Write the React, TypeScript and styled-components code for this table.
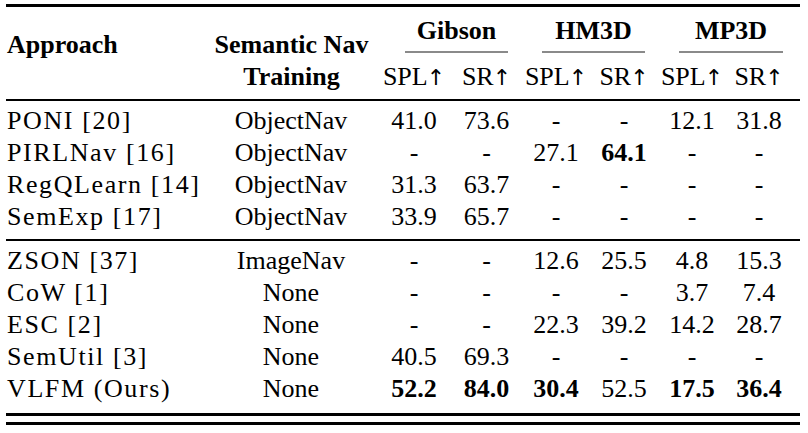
import { createGlobalStyle, styled } from 'styled-components'

const GlobalStyle = createGlobalStyle`
  html, body {
    margin: 0;
    padding: 0;
    background: #fff;
  }
  body {
    font-family: "Liberation Serif", "Times New Roman", Times, serif;
    color: #000;
  }
`

type Entry = {
  name: string
  training: string
  vals: string[]
  bold?: number[]
}

const blocks: Entry[][] = [
  [
    { name: 'PONI [20]', training: 'ObjectNav', vals: ['41.0', '73.6', '-', '-', '12.1', '31.8'] },
    { name: 'PIRLNav [16]', training: 'ObjectNav', vals: ['-', '-', '27.1', '64.1', '-', '-'], bold: [3] },
    { name: 'RegQLearn [14]', training: 'ObjectNav', vals: ['31.3', '63.7', '-', '-', '-', '-'] },
    { name: 'SemExp [17]', training: 'ObjectNav', vals: ['33.9', '65.7', '-', '-', '-', '-'] },
  ],
  [
    { name: 'ZSON [37]', training: 'ImageNav', vals: ['-', '-', '12.6', '25.5', '4.8', '15.3'] },
    { name: 'CoW [1]', training: 'None', vals: ['-', '-', '-', '-', '3.7', '7.4'] },
    { name: 'ESC [2]', training: 'None', vals: ['-', '-', '22.3', '39.2', '14.2', '28.7'] },
    { name: 'SemUtil [3]', training: 'None', vals: ['40.5', '69.3', '-', '-', '-', '-'] },
    {
      name: 'VLFM (Ours)',
      training: 'None',
      vals: ['52.2', '84.0', '30.4', '52.5', '17.5', '36.4'],
      bold: [0, 1, 2, 4, 5],
    },
  ],
]

// dataset groups: column span + trim of the cmidrule (left / right)
const datasets = [
  { label: 'Gibson', cols: '3 / 5', ml: 28, mr: 14 },
  { label: 'HM3D', cols: '5 / 7', ml: 20, mr: 13 },
  { label: 'MP3D', cols: '7 / 9', ml: 21, mr: 9 },
]

const metrics = ['SPL', 'SR', 'SPL', 'SR', 'SPL', 'SR']

function App() {
  return (
    <>
      <GlobalStyle />
      <Page>
        <Rule $h={3} $mt={0} $mb={8} />
        <Head>
          <HeadStack $col="1" $align="flex-start">
            <span>Approach</span>
            <span>&nbsp;</span>
          </HeadStack>
          <HeadStack $col="2" $align="center">
            <span>Semantic Nav</span>
            <span>Training</span>
          </HeadStack>
          {datasets.map((d) => (
            <GroupHead key={d.label} $cols={d.cols} $ml={d.ml} $mr={d.mr}>
              {d.label}
            </GroupHead>
          ))}
          {metrics.map((m, i) => (
            <Metric key={i} $col={i + 3}>
              {m}
              <Arrow>{'\u2191\uFE0E'}</Arrow>
            </Metric>
          ))}
        </Head>
        {blocks.map((block, bi) => (
          <div key={bi}>
            <Rule $h={2} $mt={6} $mb={4} />
            {block.map((r) => (
              <Row key={r.name}>
                <Name>{r.name}</Name>
                <Training>{r.training}</Training>
                {r.vals.map((v, i) => (
                  <Val key={i} $bold={!!r.bold?.includes(i)}>
                    {v}
                  </Val>
                ))}
              </Row>
            ))}
          </div>
        ))}
        <Rule $h={3} $mt={8} $mb={0} />
        <Rule $h={3} $mt={6} $mb={0} />
      </Page>
    </>
  )
}
export default App

const COLS = '199px 172px 74px 71px 68px 68px 68px 66px'

const Page = styled.div`
  width: 794px;
  padding: 4px 0 0 6px;
  font-family: "Liberation Serif", "Times New Roman", Times, serif;
  font-size: 26px;
  color: #000;
`

const Rule = styled.div<{ $h: number; $mt: number; $mb: number }>`
  width: 794px;
  height: ${({ $h }) => $h}px;
  margin-top: ${({ $mt }) => $mt}px;
  margin-bottom: ${({ $mb }) => $mb}px;
  background: #000;
`

const Head = styled.div`
  display: grid;
  grid-template-columns: ${COLS};
  grid-template-rows: 32px 14px 32px;
  line-height: 32px;
  font-weight: 700;
`

const HeadStack = styled.div<{ $col: string; $align: string }>`
  grid-column: ${({ $col }) => $col};
  grid-row: 1 / 4;
  display: flex;
  flex-direction: column;
  justify-content: flex-end;
  align-items: ${({ $align }) => $align};
  padding-left: 1px;
  white-space: nowrap;
`

const GroupHead = styled.div<{ $cols: string; $ml: number; $mr: number }>`
  grid-column: ${({ $cols }) => $cols};
  grid-row: 1 / 3;
  align-self: start;
  margin: 0 ${({ $mr }) => $mr}px 0 ${({ $ml }) => $ml}px;
  padding-bottom: 4px;
  border-bottom: 2px solid #8a8a8a;
  text-align: center;
`

const Metric = styled.div<{ $col: number }>`
  grid-column: ${({ $col }) => $col};
  grid-row: 3;
  text-align: center;
  font-weight: 400;
  white-space: nowrap;
`

const Arrow = styled.span`
  font-family: "DejaVu Sans", sans-serif;
  font-weight: 400;
  font-size: 22px;
  margin-left: -1px;
  color: #000;
`

const Row = styled.div`
  display: grid;
  grid-template-columns: ${COLS};
  height: 32px;
  line-height: 32px;
`

const Name = styled.div`
  padding-left: 1px;
  letter-spacing: 1.6px;
  white-space: nowrap;
`

const Training = styled.div`
  text-align: center;
`

const Val = styled.div<{ $bold: boolean }>`
  text-align: center;
  font-weight: ${({ $bold }) => ($bold ? 700 : 400)};
`
